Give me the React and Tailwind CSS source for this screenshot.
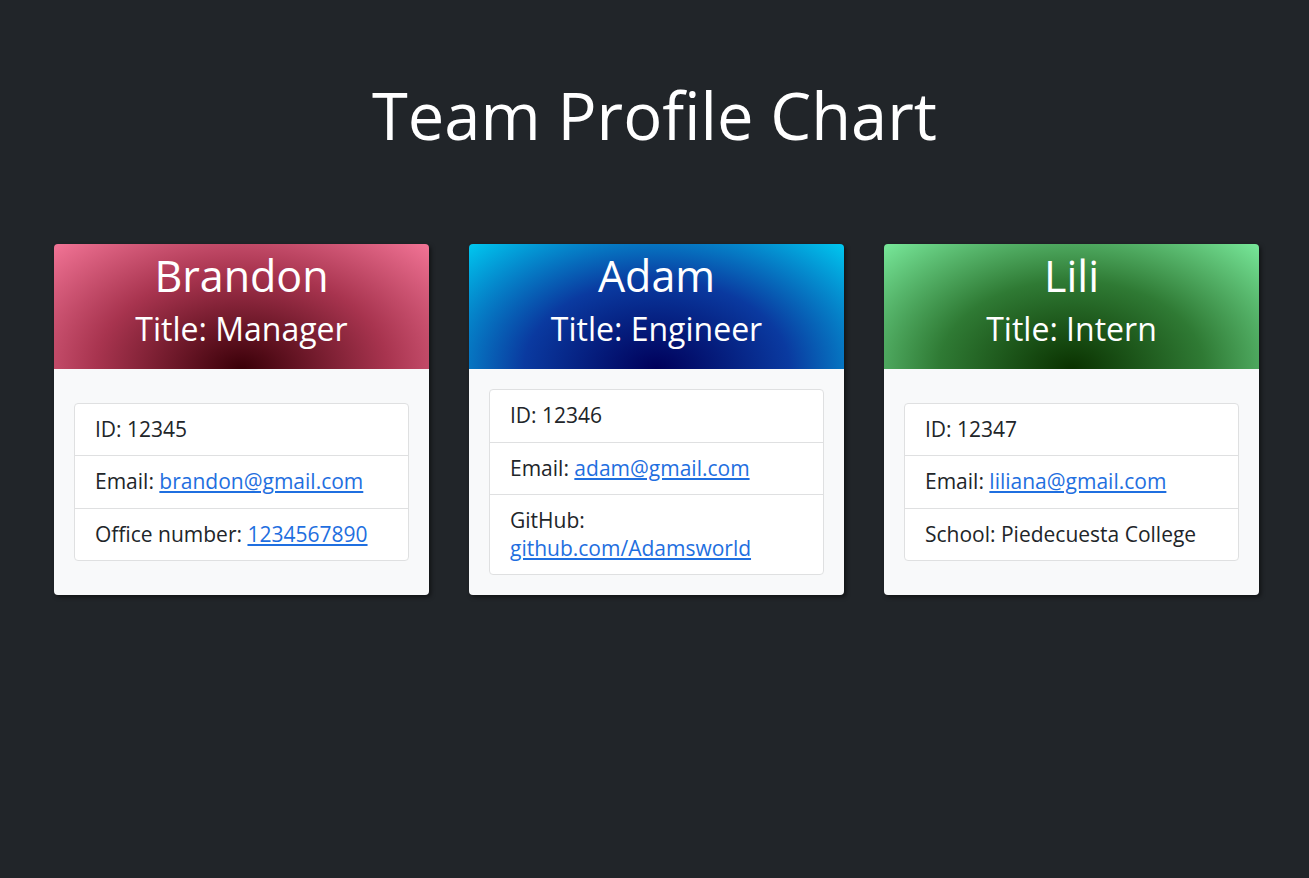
export default function App() {
  const font = { fontFamily: '"Open Sans", "Liberation Sans", sans-serif' };
  const link = "text-[#1f6fe0] underline";
  const cards = [
    {
      name: "Brandon",
      title: "Manager",
      bg: "bg-[radial-gradient(ellipse_at_bottom,#3a0008_0%,#a8344f_55%,#f27496_100%)]",
      rows: [
        <>ID: 12345</>,
        <>Email: <a href="#" className={link}>brandon@gmail.com</a></>,
        <>Office number: <a href="#" className={link}>1234567890</a></>,
      ],
    },
    {
      name: "Adam",
      title: "Engineer",
      bg: "bg-[radial-gradient(ellipse_at_bottom,#00005a_0%,#0a3aa0_50%,#00c8f0_100%)]",
      rows: [
        <>ID: 12346</>,
        <>Email: <a href="#" className={link}>adam@gmail.com</a></>,
        <>GitHub: <a href="#" className={link}>github.com/Adamsworld</a></>,
      ],
    },
    {
      name: "Lili",
      title: "Intern",
      bg: "bg-[radial-gradient(ellipse_at_bottom,#0a3200_0%,#2f7a34_50%,#78e89a_100%)]",
      rows: [
        <>ID: 12347</>,
        <>Email: <a href="#" className={link}>liliana@gmail.com</a></>,
        <>School: Piedecuesta College</>,
      ],
    },
  ];
  return (
    <div className="min-h-[878px] bg-[#212529] text-white" style={font}>
      <div className="flex justify-center pt-[71px] pb-[85px]">
        <h1 className="text-[65px] leading-[88px] font-normal">Team Profile Chart</h1>
      </div>
      <div className="flex gap-[40px] pl-[54px]">
        {cards.map((c) => (
          <div key={c.name} className="w-[375px] flex flex-col rounded-[4px] overflow-hidden shadow-[2px_2px_4px_rgba(0,0,0,0.5)]">
            <div className={`h-[125px] flex flex-col items-center pt-[6px] ${c.bg}`}>
              <div className="text-[43px] leading-[52px]">{c.name}</div>
              <div className="text-[32px] leading-[44px] mt-[5px]">Title: {c.title}</div>
            </div>
            <div className="flex-1 bg-[#f8f9fa] p-[20px] flex flex-col justify-center">
              <ul className="bg-white border border-[#dfe0e1] rounded-[4px] text-[#212529] text-[21px] leading-[27.5px]">
                {c.rows.map((r, i) => (
                  <li key={i} className={`px-[20px] py-[12px] ${i > 0 ? "border-t border-[#dfe0e1]" : ""}`}>{r}</li>
                ))}
              </ul>
            </div>
          </div>
        ))}
      </div>
    </div>
  );
}
